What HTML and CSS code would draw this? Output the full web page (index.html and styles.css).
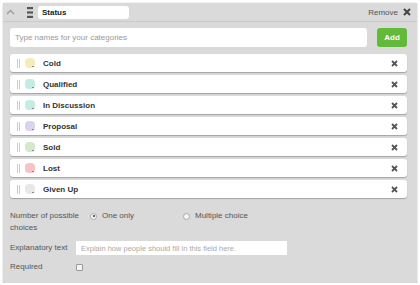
FILE: index.html
```html
<!DOCTYPE html>
<html lang="en">
<head>
  <meta charset="UTF-8" />
  <title>Status field</title>
  <link rel="stylesheet" href="styles.css">
</head>
<body>
  <div class="panel">
    <div class="panel-head">
      <span class="caret">
        <svg width="9" height="6" viewBox="0 0 9 6"><path d="M1 5 L4.5 1.5 L8 5" fill="none" stroke="#999" stroke-width="1.3"/></svg>
      </span>
      <span class="grip">
        <svg width="6" height="11" viewBox="0 0 6 11"><rect x="0" y="0" width="6" height="2.2" fill="#555"/><rect x="0" y="4.4" width="6" height="2.2" fill="#555"/><rect x="0" y="8.8" width="6" height="2.2" fill="#555"/></svg>
      </span>
      <input class="name-input" type="text" value="Status" />
      <span class="remove">Remove
        <svg width="8" height="8" viewBox="0 0 8 8"><path d="M1 1 L7 7 M7 1 L1 7" stroke="#444" stroke-width="2"/></svg>
      </span>
    </div>

    <div class="panel-body">
      <div class="add-row">
        <input class="cat-input" type="text" placeholder="Type names for your categories" />
        <button class="btn-add">Add</button>
      </div>

      <ul class="cat-list">
        <li class="cat"><span class="handle"></span><span class="swatch" style="background:#f6ecb8"></span><span class="cat-name">Cold</span><svg class="del" width="7" height="7" viewBox="0 0 7 7"><path d="M1 1 L6 6 M6 1 L1 6" stroke="#555" stroke-width="1.8"/></svg></li>
        <li class="cat"><span class="handle"></span><span class="swatch" style="background:#c4ece4"></span><span class="cat-name">Qualified</span><svg class="del" width="7" height="7" viewBox="0 0 7 7"><path d="M1 1 L6 6 M6 1 L1 6" stroke="#555" stroke-width="1.8"/></svg></li>
        <li class="cat"><span class="handle"></span><span class="swatch" style="background:#c4ece4"></span><span class="cat-name">In Discussion</span><svg class="del" width="7" height="7" viewBox="0 0 7 7"><path d="M1 1 L6 6 M6 1 L1 6" stroke="#555" stroke-width="1.8"/></svg></li>
        <li class="cat"><span class="handle"></span><span class="swatch" style="background:#dcd2ec"></span><span class="cat-name">Proposal</span><svg class="del" width="7" height="7" viewBox="0 0 7 7"><path d="M1 1 L6 6 M6 1 L1 6" stroke="#555" stroke-width="1.8"/></svg></li>
        <li class="cat"><span class="handle"></span><span class="swatch" style="background:#d4e8cc"></span><span class="cat-name">Sold</span><svg class="del" width="7" height="7" viewBox="0 0 7 7"><path d="M1 1 L6 6 M6 1 L1 6" stroke="#555" stroke-width="1.8"/></svg></li>
        <li class="cat"><span class="handle"></span><span class="swatch" style="background:#f6c4c2"></span><span class="cat-name">Lost</span><svg class="del" width="7" height="7" viewBox="0 0 7 7"><path d="M1 1 L6 6 M6 1 L1 6" stroke="#555" stroke-width="1.8"/></svg></li>
        <li class="cat"><span class="handle"></span><span class="swatch" style="background:#e8e8e8"></span><span class="cat-name">Given Up</span><svg class="del" width="7" height="7" viewBox="0 0 7 7"><path d="M1 1 L6 6 M6 1 L1 6" stroke="#555" stroke-width="1.8"/></svg></li>
      </ul>

      <div class="opt-row choices">
        <div class="opt-label wide">Number of possible choices</div>
        <label class="radio"><span class="dot on"></span>One only</label>
        <label class="radio"><span class="dot"></span>Multiple choice</label>
      </div>

      <div class="opt-row">
        <div class="opt-label">Explanatory text</div>
        <input class="explain" type="text" placeholder="Explain how people should fill in this field here." />
      </div>

      <div class="opt-row">
        <div class="opt-label">Required</div>
        <span class="check"></span>
      </div>
    </div>
  </div>
</body>
</html>
```

FILE: styles.css
```css
* {
  margin: 0;
  padding: 0;
  box-sizing: border-box;
  font-family: 'Liberation Sans', Arial, sans-serif;
}

body {
  background: #fff;
  padding: 3px 3px 0 3px;
}

.panel {
  width: 414px;
  height: 280px;
  background: #dadada;
  border-radius: 2px;
  box-shadow: 0 0 1px rgba(0, 0, 0, 0.35), 0 1px 2px rgba(0, 0, 0, 0.15);
}

.panel-head {
  display: flex;
  align-items: center;
  height: 19px;
  padding: 0 6px 0 3px;
  border-bottom: 1px solid #c9c9c9;
}

.caret {
  display: flex;
  width: 12px;
  margin-right: 9px;
}

.grip {
  display: flex;
  margin-right: 5px;
}

.name-input {
  width: 91px;
  height: 13px;
  border: none;
  border-radius: 3px;
  background: #fff;
  padding: 0 4px;
  font-size: 8px;
  font-weight: bold;
  color: #222;
  outline: none;
}

.remove {
  margin-left: auto;
  display: flex;
  align-items: center;
  gap: 5px;
  font-size: 8px;
  color: #555;
}

.panel-body {
  padding: 6px 10px 0 7px;
}

.add-row {
  display: flex;
  gap: 10px;
  margin-bottom: 7px;
}

.cat-input {
  flex: 1;
  height: 19px;
  border: none;
  border-radius: 3px;
  background: #fff;
  padding: 0 5px;
  font-size: 8px;
  outline: none;
}

.cat-input::placeholder {
  color: #999;
}

.btn-add {
  width: 30px;
  height: 19px;
  border: none;
  border-radius: 3px;
  background: #62b93a;
  color: #fff;
  font-size: 8px;
  font-weight: bold;
}

.cat-list {
  list-style: none;
  display: flex;
  flex-direction: column;
  gap: 3px;
  margin-bottom: 12px;
}

.cat {
  display: flex;
  align-items: center;
  height: 18px;
  background: #fff;
  border-radius: 3px;
  box-shadow: 0 1px 1px rgba(0, 0, 0, 0.25);
  padding: 0 9px 0 7px;
}

.handle {
  width: 3px;
  height: 9px;
  border-left: 1px solid #ccc;
  border-right: 1px solid #ccc;
  margin-right: 5px;
}

.swatch {
  position: relative;
  width: 10px;
  height: 10px;
  border-radius: 4px;
  margin-right: 8px;
}

.swatch::after {
  content: '';
  position: absolute;
  right: 1px;
  bottom: 1px;
  width: 2px;
  height: 1px;
  background: #888;
}

.cat-name {
  font-size: 8px;
  font-weight: bold;
  color: #333;
}

.del {
  margin-left: auto;
}

.opt-row {
  display: flex;
  align-items: center;
  font-size: 8px;
  color: #555;
  margin-bottom: 6px;
}

.opt-row.choices {
  align-items: flex-start;
  margin-bottom: 7px;
}

.opt-label {
  width: 66px;
  line-height: 12px;
}

.opt-label.wide {
  width: 80px;
}

.radio {
  display: flex;
  align-items: center;
  gap: 5px;
  width: 93px;
  line-height: 12px;
}

.dot {
  width: 7px;
  height: 7px;
  border-radius: 50%;
  border: 1px solid #aaa;
  background: #f4f4f4;
  position: relative;
}

.dot.on::after {
  content: '';
  position: absolute;
  left: 1.5px;
  top: 1.5px;
  width: 2px;
  height: 2px;
  border-radius: 50%;
  background: #333;
}

.explain {
  width: 211px;
  height: 14px;
  border: none;
  background: #fff;
  padding: 0 5px;
  font-size: 7.5px;
  outline: none;
}

.explain::placeholder {
  color: #aaa;
}

.check {
  width: 7px;
  height: 7px;
  border: 1px solid #999;
  border-radius: 1px;
  background: #f4f4f4;
  margin: 2px 0;
}
```
